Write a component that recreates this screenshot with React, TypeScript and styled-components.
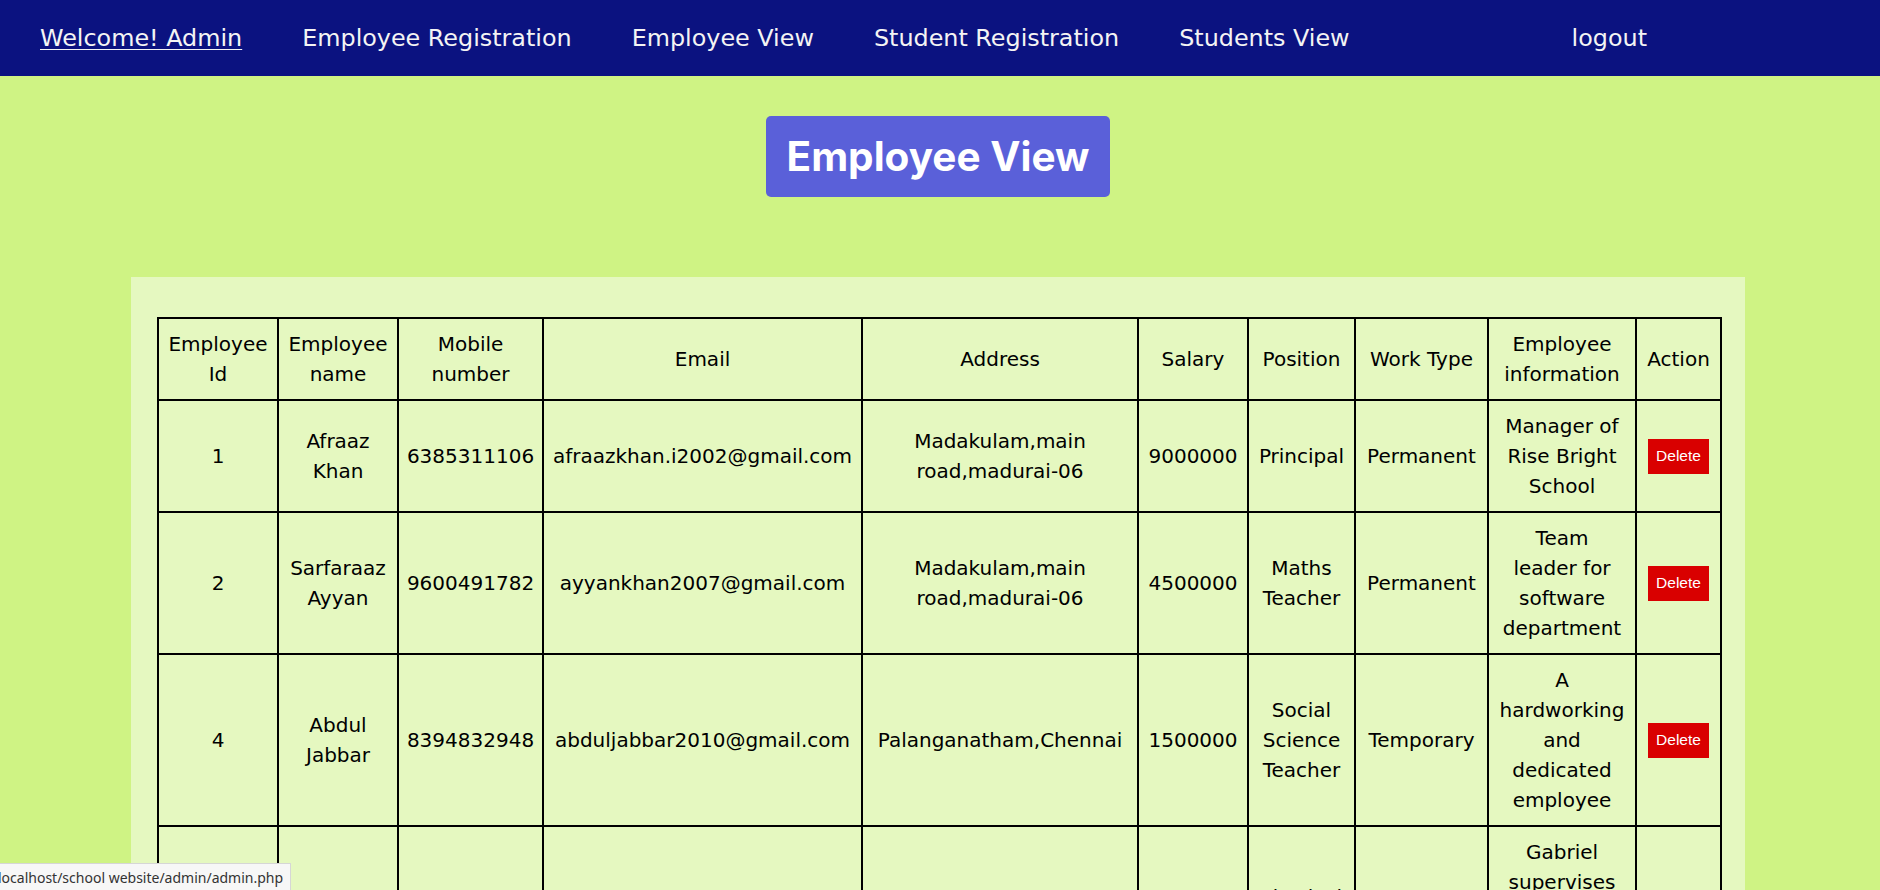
import React from "react";
import styled, { createGlobalStyle } from "styled-components";

const GlobalStyle = createGlobalStyle`
  html { scrollbar-width: none; }
  html::-webkit-scrollbar { display: none; }
  body {
    margin: 0;
    background: #cff384;
    font-family: "DejaVu Sans", "Liberation Sans", sans-serif;
    color: #000;
  }
`;

const NavBar = styled.nav`
  display: flex;
  align-items: center;
  height: 76px;
  padding-left: 40px;
  background: #0b1280;
  gap: 60px;
`;

const NavLink = styled.a<{ $underline?: boolean; $push?: boolean }>`
  font-family: "DejaVu Sans", sans-serif;
  font-size: 23.85px;
  color: #f4f4f4;
  text-decoration: ${(p) => (p.$underline ? "underline" : "none")};
  text-underline-offset: 3px;
  text-decoration-thickness: 1px;
  white-space: nowrap;
  ${(p) => (p.$push ? "margin-left: auto; margin-right: 233px;" : "")}
`;

const Main = styled.main`
  width: 1876px;
  display: flex;
  flex-direction: column;
  align-items: center;
`;

const Title = styled.h1`
  margin: 40px 0 0;
  padding: 16px 21px;
  background: #5a60d9;
  border-radius: 5px;
  color: #fff;
  font-family: Inter, "DejaVu Sans", sans-serif;
  font-weight: 700;
  font-size: 40.5px;
  line-height: normal;
`;

const Panel = styled.section`
  width: 1614px;
  box-sizing: border-box;
  margin-top: 80px;
  padding: 40px 25px 60px 26px;
  background: #e5f8c0;
`;

const Table = styled.table`
  width: 1563px;
  table-layout: fixed;
  border-collapse: collapse;
  border: 2px solid #000;
`;

const Cell = styled.td`
  border: 2px solid #000;
  padding: 10px 4px;
  font-size: 20px;
  line-height: 30px;
  text-align: center;
  vertical-align: middle;
  white-space: pre;
  font-weight: 400;
`;

const HeadCell = styled(Cell).attrs({ as: "th" })``;

const DeleteButton = styled.button`
  border: none;
  border-radius: 0;
  background: #d90000;
  color: #fff;
  font-family: "Liberation Sans", Arial, sans-serif;
  font-size: 15.5px;
  line-height: 18px;
  padding: 8.5px 8px;
  cursor: pointer;
`;

const StatusBubble = styled.div`
  position: fixed;
  left: -9px;
  bottom: 0;
  height: 26px;
  display: flex;
  align-items: center;
  padding: 0 7px 0 6px;
  background: #f7f7f7;
  border: 1px solid #d6d6d6;
  border-bottom: none;
  font-family: "Noto Sans", sans-serif;
  font-size: 14px;
  color: #333;
  white-space: nowrap;
`;

const widths = [120, 120, 145, 319, 276, 110, 107, 133, 148, 85];

const headers = [
  "Employee\nId",
  "Employee\nname",
  "Mobile\nnumber",
  "Email",
  "Address",
  "Salary",
  "Position",
  "Work Type",
  "Employee\ninformation",
  "Action",
];

type Row = string[];

const rows: Row[] = [
  [
    "1",
    "Afraaz\nKhan",
    "6385311106",
    "afraazkhan.i2002@gmail.com",
    "Madakulam,main\nroad,madurai-06",
    "9000000",
    "Principal",
    "Permanent",
    "Manager of\nRise Bright\nSchool",
  ],
  [
    "2",
    "Sarfaraaz\nAyyan",
    "9600491782",
    "ayyankhan2007@gmail.com",
    "Madakulam,main\nroad,madurai-06",
    "4500000",
    "Maths\nTeacher",
    "Permanent",
    "Team\nleader for\nsoftware\ndepartment",
  ],
  [
    "4",
    "Abdul\nJabbar",
    "8394832948",
    "abduljabbar2010@gmail.com",
    "Palanganatham,Chennai",
    "1500000",
    "Social\nScience\nTeacher",
    "Temporary",
    "A\nhardworking\nand\ndedicated\nemployee",
  ],
  [
    "5",
    "Gabriel\nRaj",
    "9876543210",
    "gabrielraj2005@gmail.com",
    "Anna\nNagar,Chennai",
    "3500000",
    "Physical\nEducation\nTeacher",
    "Permanent",
    "Gabriel\nsupervises\nthe sports\nactivities\nof all\nstudents",
  ],
];

export default function App() {
  return (
    <>
      <GlobalStyle />
      <NavBar>
        <NavLink href="#" $underline>
          Welcome! Admin
        </NavLink>
        <NavLink href="#">Employee Registration</NavLink>
        <NavLink href="#">Employee View</NavLink>
        <NavLink href="#">Student Registration</NavLink>
        <NavLink href="#">Students View</NavLink>
        <NavLink href="#" $push>
          logout
        </NavLink>
      </NavBar>
      <Main>
        <Title>Employee View</Title>
        <Panel>
          <Table>
            <colgroup>
              {widths.map((w, i) => (
                <col key={i} style={{ width: w }} />
              ))}
            </colgroup>
            <thead>
              <tr>
                {headers.map((h) => (
                  <HeadCell key={h}>{h}</HeadCell>
                ))}
              </tr>
            </thead>
            <tbody>
              {rows.map((r) => (
                <tr key={r[0]}>
                  {r.map((c, i) => (
                    <Cell key={i}>{c}</Cell>
                  ))}
                  <Cell>
                    <DeleteButton>Delete</DeleteButton>
                  </Cell>
                </tr>
              ))}
            </tbody>
          </Table>
        </Panel>
      </Main>
      <StatusBubble>localhost/school website/admin/admin.php</StatusBubble>
    </>
  );
}
